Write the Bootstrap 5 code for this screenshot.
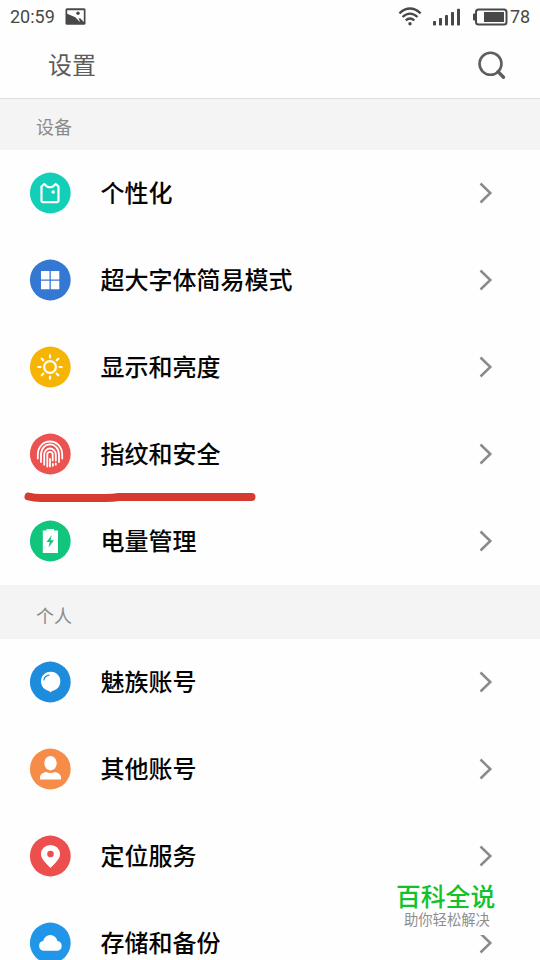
<!DOCTYPE html>
<html lang="zh-CN">
<head>
<meta charset="utf-8">
<meta name="viewport" content="width=device-width, initial-scale=1">
<title>设置</title>
<link rel="stylesheet" href="https://cdn.jsdelivr.net/npm/bootstrap@5.3.0/dist/css/bootstrap.min.css">
<style>
body{font-family:"Noto Sans CJK SC",sans-serif;color:#050505}
.screen{width:540px;height:960px;background:#fefefe}
.status{height:33px;padding:0 10px;font:18px/33px Roboto,sans-serif;color:#484848}
.status .clock{width:55px}
.status .level{width:20px;margin-left:2px}
.status .signal{margin-left:8px;margin-right:6px}
.title-bar{height:66px;padding:0 34px 0 48px;border-bottom:1px solid #dedede;color:#5c5c5c}
.title-bar h1{font-size:24px;line-height:62px;font-weight:400;padding-bottom:3px}
.section-label{height:51px;padding-left:36px;background:#f4f4f4;color:#8b8b8b;font-size:18px;line-height:55px}
.section-label.tall{height:54px;line-height:61px}
.setting{height:87px;padding:0 47px 2px 29px!important;background:transparent;color:#050505;font-size:24px;font-weight:500;line-height:36px}
.setting .name{margin-left:29.5px;padding-bottom:2px}
.underline-mark{left:23px;top:490px}
.watermark{left:384px;top:880px;width:132px;height:55px;background:#fefefe}
.watermark .brand{font-size:24.8px;line-height:30px;font-weight:500;color:#0fc32c}
.watermark .motto{font-size:14.3px;line-height:18px;color:#8e8e8e}
</style>
</head>
<body class="m-0 overflow-hidden">
<svg class="d-none">
<symbol id="chevron" viewBox="0 0 14 22"><path d="M1.500 1.500 11.300 11 1.500 20.500" fill="none" stroke="#8a8a8a" stroke-width="2.500"/></symbol>
</svg>
<main class="screen position-relative overflow-hidden">
<div class="status d-flex align-items-center">
<span class="clock">20:59</span>
<svg width="22" height="17" viewBox="0 0 22 17"><rect x=".5" y=".3" width="20" height="16.400" rx="1.500" fill="#484848"/><path d="M2.200 2.200h16.600V14L15.500 10.500 13.500 10.300 15.200 14.300 10.300 9.300 2.200 5.800z" fill="#fefefe"/><circle cx="13" cy="5.200" r="1.700" fill="#484848"/></svg>
<svg class="ms-auto" width="24" height="20" viewBox="0 0 24 20" fill="none" stroke="#484848" stroke-width="2.300"><path d="M1.400 6.300Q12-3.200 22.600 6.300M4.500 10Q12 3.200 19.500 10M7.700 13.400Q12 9.600 16.300 13.400"/><circle cx="12" cy="16.700" r="1.700" fill="#484848" stroke="none"/></svg>
<svg class="signal" width="32" height="18" viewBox="0 0 32 18" fill="#484848"><rect x="3" y="13" width="3" height="4.500" rx=".7"/><rect x="9" y="10" width="3" height="7.500" rx=".7"/><rect x="15" y="7" width="3" height="10.500" rx=".7"/><rect x="21" y="4" width="3" height="13.500" rx=".7"/><rect x="27" y=".8" width="3" height="16.700" rx=".7"/></svg>
<svg class="ms-1" width="36" height="18" viewBox="0 0 36 18"><path d="M3.500 6H1.500v6h2" fill="#484848" stroke="#484848"/><rect x="4" y="1.500" width="30.500" height="15" rx="2.500" fill="none" stroke="#484848" stroke-width="2"/><rect x="12" y="4" width="20" height="10" fill="#484848"/></svg>
<span class="level">78</span>
</div>
<header class="title-bar d-flex align-items-center justify-content-between">
<h1 class="m-0">设置</h1>
<svg width="29" height="29" viewBox="0 0 29 29" fill="none" stroke="#5e5e5e"><circle cx="13.500" cy="12.800" r="11" stroke-width="2.600"/><path d="m21 20.600 5.500 5.600" stroke-width="3.400" stroke-linecap="round"/></svg>
</header>
<section>
<div class="section-label">设备</div>
<div class="list-group list-group-flush">
<div class="setting list-group-item border-0 d-flex align-items-center">
<svg width="42" height="42" viewBox="0 0 42 42"><circle cx="21.300" cy="21" r="20.400" fill="#13cfb7"/><path d="M12.500 14.500 15.300 12 18 14.500Q21 16 24 14.500L26.700 12l2.800 2.500v14.200a1.500 1.500 0 0 1-1.500 1.500H14a1.500 1.500 0 0 1-1.500-1.500z" fill="none" stroke="#fff" stroke-width="2.200" stroke-linejoin="round"/><circle cx="24.200" cy="20" r="1.800" fill="#fff"/></svg>
<span class="name">个性化</span><svg class="ms-auto" width="14" height="22"><use href="#chevron"/></svg></div>
<div class="setting list-group-item border-0 d-flex align-items-center">
<svg width="42" height="42" viewBox="0 0 42 42"><circle cx="21.300" cy="21" r="20.400" fill="#3478d4"/><path d="M12 12h8.500v8.500H12zM21.800 12h8.500v8.500h-8.500zM12 21.800h8.500v8.500H12zM21.800 21.800h8.500v8.500h-8.500z" fill="#fff"/></svg>
<span class="name">超大字体简易模式</span><svg class="ms-auto" width="14" height="22"><use href="#chevron"/></svg></div>
<div class="setting list-group-item border-0 d-flex align-items-center">
<svg width="42" height="42" viewBox="0 0 42 42"><circle cx="21.300" cy="21" r="20.400" fill="#f6b405"/><g fill="none" stroke="#fff" stroke-width="2.200" stroke-linecap="round"><circle cx="21" cy="21" r="5.900"/><path d="M21 9.300v2.200M21 30.500v2.200M9.300 21h2.200M30.500 21h2.200M12.700 12.700l1.600 1.600M27.700 27.700l1.600 1.600M12.700 29.300l1.600-1.600M27.700 14.300l1.600-1.600"/></g></svg>
<span class="name">显示和亮度</span><svg class="ms-auto" width="14" height="22"><use href="#chevron"/></svg></div>
<div class="setting list-group-item border-0 d-flex align-items-center">
<svg width="42" height="42" viewBox="0 0 42 42"><circle cx="21.300" cy="21" r="20.400" fill="#ec5350"/><g fill="none" stroke="#fff" stroke-width="1.800" stroke-linecap="round"><path d="M8.800 25.500v-3.500C8.800 4 33.200 4 33.200 22v3.500"/><path d="M12 29v-7C12 7.800 30 7.800 30 22v7"/><path d="M15.200 31.700V21.500a5.800 6 0 0 1 11.600 0v6M26.800 30.500v1.200"/><path d="M18.300 33.500V21.500a2.700 2.700 0 0 1 5.400 0v6"/><path d="M21 26v7.500M23.900 30.800v2"/></g></svg>
<span class="name">指纹和安全</span><svg class="ms-auto" width="14" height="22"><use href="#chevron"/></svg></div>
<div class="setting list-group-item border-0 d-flex align-items-center">
<svg width="42" height="42" viewBox="0 0 42 42"><circle cx="21.300" cy="21" r="20.400" fill="#11c67c"/><path d="M17.500 9h7.500v1.500h4v22.500H13.800V10.500h3.700z" fill="#fff"/><path d="m22.800 15-5.300 7h3.300l-1.300 5.500 5.500-7.300h-3.500z" fill="#11c67c"/></svg>
<span class="name">电量管理</span><svg class="ms-auto" width="14" height="22"><use href="#chevron"/></svg></div>
</div>
</section>
<section>
<div class="section-label tall">个人</div>
<div class="list-group list-group-flush">
<div class="setting list-group-item border-0 d-flex align-items-center">
<svg width="42" height="42" viewBox="0 0 42 42"><circle cx="21.300" cy="21" r="20.400" fill="#1d8cdd"/><path d="M21.500 31.500c-1-1.500-2.500-1.700-4-2.400a9.700 9.700 0 1 1 8.300 0c-1.500.7-3.300.9-4.300 2.400z" fill="#fff"/><path d="M14.900 19q.6-4 5-4.800" fill="none" stroke="#1d8cdd" stroke-width="1.200" stroke-linecap="round"/></svg>
<span class="name">魅族账号</span><svg class="ms-auto" width="14" height="22"><use href="#chevron"/></svg></div>
<div class="setting list-group-item border-0 d-flex align-items-center">
<svg width="42" height="42" viewBox="0 0 42 42"><circle cx="21.300" cy="21" r="20.400" fill="#f78c48"/><g fill="#fff"><ellipse cx="21.500" cy="15.200" rx="6.200" ry="7.300"/><path d="M11 31.500v-2.300c0-3 4-5 6.200-5.200q4.300 2 8.600 0c2.200.2 6.200 2.200 6.200 5.200v2.300z"/></g></svg>
<span class="name">其他账号</span><svg class="ms-auto" width="14" height="22"><use href="#chevron"/></svg></div>
<div class="setting list-group-item border-0 d-flex align-items-center">
<svg width="42" height="42" viewBox="0 0 42 42"><circle cx="21.300" cy="21" r="20.400" fill="#ec4f4d"/><path d="M21.500 33c-3.500-4-9.500-8.700-9.500-13.800a9.500 9.300 0 0 1 19 0c0 5.100-6 9.800-9.500 13.800z" fill="#fff"/><circle cx="21.500" cy="19" r="3.300" fill="#ec4f4d"/></svg>
<span class="name">定位服务</span><svg class="ms-auto" width="14" height="22"><use href="#chevron"/></svg></div>
<div class="setting list-group-item border-0 d-flex align-items-center">
<svg width="42" height="42" viewBox="0 0 42 42"><circle cx="21.300" cy="21" r="20.400" fill="#2196e8"/><path d="M14.500 28.800a4.900 4.900 0 0 1-.3-9.700 7.200 7.200 0 0 1 14.200 0 4.900 4.900 0 0 1 .1 9.700z" fill="#fff"/></svg>
<span class="name">存储和备份</span><svg class="ms-auto" width="14" height="22"><use href="#chevron"/></svg></div>
</div>
</section>
<svg class="underline-mark position-absolute" width="236" height="14" viewBox="0 0 236 14"><path d="M5.500 6.500Q11 8 18 8H82Q90 8 96 7H228.500" fill="none" stroke="#d63a30" stroke-width="8" stroke-linecap="round" stroke-linejoin="round"/></svg>
<aside class="watermark position-absolute text-nowrap"><div class="brand ps-2 ms-1">百科全说</div><div class="motto ps-3 ms-1">助你轻松解决</div></aside>
</main>
<script src="https://cdn.jsdelivr.net/npm/bootstrap@5.3.0/dist/js/bootstrap.bundle.min.js"></script>
</body>
</html>
